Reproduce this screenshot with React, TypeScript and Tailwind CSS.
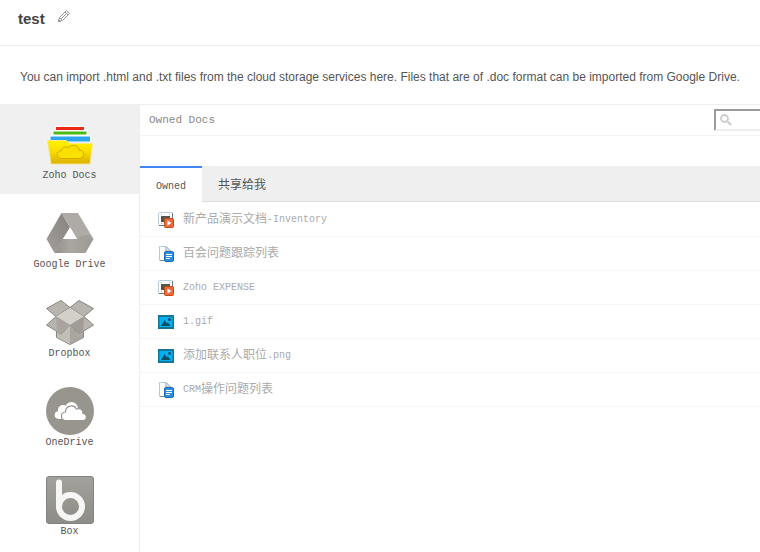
import { useState, type ReactNode } from 'react';

const MONO = "font-['Liberation_Mono','Noto_Sans_CJK_SC',monospace]";

function ZohoDocsIcon() {
  return (
    <svg width="48" height="48" viewBox="0 0 48 48" aria-hidden="true">
      <defs>
        <linearGradient id="folder" x1="0" y1="0" x2="0" y2="1">
          <stop offset="0" stopColor="#fff200" />
          <stop offset="0.45" stopColor="#f8de00" />
          <stop offset="1" stopColor="#dcb000" />
        </linearGradient>
      </defs>
      <rect x="9" y="6" width="30" height="5" fill="#fff" />
      <rect x="10" y="7" width="28" height="3" fill="#ea2a13" />
      <rect x="6.500" y="10.500" width="35" height="5" fill="#fff" />
      <rect x="7.500" y="11.500" width="33" height="3" fill="#4bb916" />
      <rect x="3.500" y="15.500" width="41" height="6" fill="#fff" />
      <rect x="4.500" y="16.500" width="39.500" height="5" fill="#2da5ee" />
      <path d="M1.500 20.500H20l4 3H46.500l-2.500 20.500H5z" fill="url(#folder)" stroke="#f7e88a" strokeWidth="1" />
      <path
        d="M16 38.500c-6.500 0-6-7.500-.5-8 .5-4 5-4.500 7-2.500 2.500-4.500 10.500-3 10.500 2 6.500 0 6 8.500 0 8.500z"
        fill="#fae000"
        stroke="#d3ab06"
        strokeWidth="1"
      />
    </svg>
  );
}

function GoogleDriveIcon() {
  return (
    <svg width="48" height="48" viewBox="0 0 48 48" aria-hidden="true">
      <defs>
        <linearGradient id="driveLeft" x1="1" y1="0" x2="0" y2="1">
          <stop offset="0" stopColor="#85817d" />
          <stop offset="1" stopColor="#a39f9b" />
        </linearGradient>
        <linearGradient id="driveBottom" x1="0" y1="0" x2="1" y2="0">
          <stop offset="0" stopColor="#938f8a" />
          <stop offset="0.4" stopColor="#aaa6a1" />
          <stop offset="1" stopColor="#9c9893" />
        </linearGradient>
      </defs>
      <path d="M15.500 4H32l15.500 26H31z" fill="#aeaaa5" />
      <path d="M15.500 4 24 18.500 8.500 44 .5 30z" fill="url(#driveLeft)" />
      <path d="M16.500 30h31L39.500 44h-31z" fill="url(#driveBottom)" />
      <path d="M31 30 C34 27 38 26 44 26l3.500 4z" fill="#a39f9a" />
      <path d="M24 18.500 31 30H17z" fill="#fff" />
    </svg>
  );
}

function DropboxIcon() {
  return (
    <svg width="48" height="48" viewBox="0 0 48 48" aria-hidden="true">
      <g stroke="#88847f" strokeWidth="1" strokeLinejoin="round">
        <path d="M10.500 32v7.500L24 46.500l13.500-7V32z" fill="#b7b3ae" />
        <path d="M15 2.500 24 9.500 10 18.500.5 10.500z" fill="#b8b4ae" />
        <path d="M33 2.500 24 9.500 38 18.500 47.500 10.500z" fill="#b8b4ae" />
        <path d="M10 18.500.5 27 15 36l9-9z" fill="#b8b4ae" />
        <path d="M38 18.500 47.500 27 33 36l-9-9z" fill="#b8b4ae" />
      </g>
      <path d="M24 10 38 18.500 24 27 10 18.500z" fill="#d3d0ca" />
      <path d="M10 18.500 24 27 15 36l-4-2z" fill="#aaa59f" />
      <path d="M38 18.500 24 27l9 9 4-2z" fill="#a19c96" />
      <path d="M24 27v19L11 39.500v-4l4 2z" fill="#c1bdb7" />
      <path d="M24 27v19l13-6.500v-4l-4 2z" fill="#aaa69f" />
    </svg>
  );
}

function OneDriveIcon() {
  return (
    <svg width="48" height="48" viewBox="0 0 48 48" aria-hidden="true">
      <circle cx="24" cy="24" r="24" fill="#98948e" />
      <g fill="#fff">
        <circle cx="12.500" cy="28" r="3.800" />
        <circle cx="17" cy="23" r="5" />
        <circle cx="25.500" cy="21.500" r="6.500" />
        <path d="M12 22h20v6l-10 4H12z" />
      </g>
      <path
        d="M20 33.500c-6 0-6-8-.5-8.500 0-6.500 8.500-8 11-3 4-1.500 6.500 1 6.500 4.500 4.500.5 4.500 7 0 7z"
        fill="#fff"
        stroke="#98948e"
        strokeWidth="1.200"
      />
    </svg>
  );
}

function BoxIcon() {
  return (
    <svg width="48" height="48" viewBox="0 0 48 48" aria-hidden="true">
      <defs>
        <linearGradient id="boxTile" x1="0" y1="0" x2="0" y2="1">
          <stop offset="0" stopColor="#a3a19c" />
          <stop offset="1" stopColor="#8e8c87" />
        </linearGradient>
      </defs>
      <rect x="0.500" y="0.500" width="47" height="47" rx="2.500" fill="url(#boxTile)" stroke="#85837e" />
      <path d="M13 6.500v24" stroke="#f6f6f4" strokeWidth="6" strokeLinecap="round" />
      <circle cx="24.500" cy="30.500" r="11.500" fill="none" stroke="#f6f6f4" strokeWidth="6" />
    </svg>
  );
}

function ShowIcon() {
  return (
    <svg width="16" height="16" viewBox="0 0 16 16" aria-hidden="true">
      <rect x="0.500" y="0.500" width="14" height="13" rx="1" fill="#fff" stroke="#b7cbdb" />
      <path d="M14.500 1v6M1 13.500h5" stroke="#657884" />
      <path d="M3 2.500h1M11 2.500h1M3 11.500h1" stroke="#9cb2c1" />
      <rect x="3" y="4" width="9" height="6" fill="#55534b" />
      <rect x="6.500" y="6.500" width="9" height="9" rx="1" fill="#ea6a3c" stroke="#c44a13" />
      <path d="M9.500 8.500v5l4-2.500z" fill="#fff" />
    </svg>
  );
}

function WriterIcon() {
  return (
    <svg width="16" height="16" viewBox="0 0 16 16" aria-hidden="true">
      <path d="M1.500.5H8L12.500 5v9.500h-11z" fill="#fff" stroke="#b4cadb" />
      <path d="M8 .5V5h4.500z" fill="#e9f2f8" stroke="#91aabd" />
      <path d="M2 14.500h4" stroke="#71899b" />
      <rect x="6.500" y="5.500" width="9" height="10" rx="1.500" fill="#2e8bdc" stroke="#176cc0" />
      <path d="M8 8.500h6M8 10.500h6M8 12.500h4" stroke="#fff" />
    </svg>
  );
}

function ImageIcon() {
  return (
    <svg width="16" height="16" viewBox="0 0 16 16" aria-hidden="true">
      <rect x="0" y="1" width="16" height="14" fill="#16748f" />
      <rect x="1.500" y="3" width="13" height="10" fill="#02b1f3" />
      <path d="M3 12 6.500 6 9 9.500l1-1L12.500 12z" fill="#0b4f66" />
      <circle cx="11.500" cy="5.500" r="1.500" fill="#0b4f66" />
    </svg>
  );
}

const services: { name: string; icon: ReactNode }[] = [
  { name: 'Zoho Docs', icon: <ZohoDocsIcon /> },
  { name: 'Google Drive', icon: <GoogleDriveIcon /> },
  { name: 'Dropbox', icon: <DropboxIcon /> },
  { name: 'OneDrive', icon: <OneDriveIcon /> },
  { name: 'Box', icon: <BoxIcon /> },
];

const files: { name: string; icon: ReactNode }[] = [
  { name: '新产品演示文档-Inventory', icon: <ShowIcon /> },
  { name: '百会问题跟踪列表', icon: <WriterIcon /> },
  { name: 'Zoho EXPENSE', icon: <ShowIcon /> },
  { name: '1.gif', icon: <ImageIcon /> },
  { name: '添加联系人职位.png', icon: <ImageIcon /> },
  { name: 'CRM操作问题列表', icon: <WriterIcon /> },
];

// Latin letters are set at half the width of a Chinese character.
function MixedText({ text }: { text: string }) {
  const parts = text.match(/[\x20-\x7e]+|[^\x20-\x7e]+/g) ?? [];
  return (
    <span className="inline-flex items-center leading-4">
      {parts.map((part, i) => (
        <span key={i} className={/^[\x20-\x7e]/.test(part) ? 'text-[10px] leading-4' : 'text-xs leading-4'}>
          {part}
        </span>
      ))}
    </span>
  );
}

export default function App() {
  const [service, setService] = useState('Zoho Docs');
  const [tab, setTab] = useState('Owned');

  return (
    <div className="flex h-screen flex-col overflow-hidden bg-white font-['Liberation_Sans',Arial,sans-serif]">
      <header className="flex h-[46px] shrink-0 items-start gap-3 border-b border-[#eeeeee] pt-2 pl-[18px]">
        <h1 className="text-[15px] leading-[22px] font-bold text-[#444444]">test</h1>
        <button type="button" aria-label="Edit name" className="pt-px">
          <svg width="14" height="14" viewBox="0 0 14 14" fill="none" stroke="#999999" strokeWidth="1" aria-hidden="true">
            <path d="M1.500 12.500 2.500 8.500 9.500 1.500 12.500 4.500 5.500 11.500z" />
            <path d="M4 10 10.500 3.500M8 3l3 3M2.500 8.500l3 3" />
            <path d="M1.500 12.500v-2l2 2z" fill="#8d8d8d" />
          </svg>
        </button>
      </header>
      <p className="h-[59px] shrink-0 border-b border-[#eeeeee] pt-[22px] pl-5 text-xs leading-[18px] whitespace-nowrap text-[#555555]">
        You can import .html and .txt files from the cloud storage services here. Files that are of .doc format can be imported from Google Drive.
      </p>
      <div className={`flex min-h-0 flex-1 ${MONO}`}>
        <nav className="w-[140px] shrink-0 border-r border-[#eeeeee]">
          {services.map((s) => (
            <button
              key={s.name}
              type="button"
              onClick={() => setService(s.name)}
              className={`flex w-full flex-col items-center gap-px pt-[15px] pb-[11px] text-[10px] leading-[14px] text-[#555555] ${
                service === s.name ? 'bg-[#f0f0f0]' : 'bg-white'
              }`}
            >
              {s.icon}
              {s.name}
            </button>
          ))}
        </nav>
        <main className="min-w-0 flex-1">
          <div className="flex h-[31px] items-center justify-between border-b border-[#f3f3f3] pl-[9px]">
            <h2 className="text-[11px] text-[#888888]">Owned Docs</h2>
            <label className="flex h-[22px] w-[46px] items-center gap-1 border-t-2 border-b-2 border-l-2 border-t-[#9a9a9a] border-b-[#eeeeee] border-l-[#9a9a9a] pl-1">
              <svg width="12" height="12" viewBox="0 0 12 12" fill="none" stroke="#cccccc" className="shrink-0" aria-hidden="true">
                <circle cx="4.500" cy="4.500" r="3.500" strokeWidth="1.800" />
                <path d="m7.500 7.500 3.500 3.500" strokeWidth="2.200" />
              </svg>
              <input type="search" aria-label="Search documents" className="w-full min-w-0 text-[10px] outline-none" />
            </label>
          </div>
          <div className="mt-[30px] flex h-9 bg-[#efefef]" role="tablist">
            {['Owned', '共享给我'].map((t) => (
              <button
                key={t}
                type="button"
                role="tab"
                aria-selected={tab === t}
                onClick={() => setTab(t)}
                className={`border-t-2 px-4 text-[#555555] ${
                  tab === t
                    ? 'border-t-[#4285f4] bg-white'
                    : 'border-b border-t-transparent border-b-[#dddddd]'
                }`}
              >
                <MixedText text={t} />
              </button>
            ))}
            <div className="flex-1 border-b border-[#dddddd]" />
          </div>
          <ul className="pt-px">
            {files.map((f) => (
              <li key={f.name} className="flex h-[34px] items-center gap-[9px] border-b border-[#f6f6f6] pl-[18px] text-[#aaaaaa]">
                {f.icon}
                <MixedText text={f.name} />
              </li>
            ))}
          </ul>
        </main>
      </div>
    </div>
  );
}
